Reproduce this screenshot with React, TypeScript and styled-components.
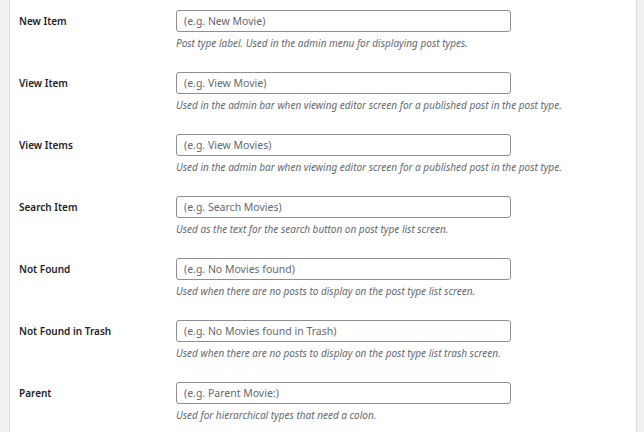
import React from "react";
import styled, { createGlobalStyle } from "styled-components";

const Global = createGlobalStyle`
  html, body { margin: 0; padding: 0; background: #f0f0f1; }
  body { font-family: "Noto Sans", "Open Sans", sans-serif; color: #1d2327; }
  * { box-sizing: border-box; }
`;

const Page = styled.div`
  padding-left: 9px;
  padding-right: 7px;
  height: 432px;
  overflow: hidden;
`;

const Panel = styled.div`
  background: #fff;
  border-left: 1px solid #dcdcde;
  border-right: 1px solid #dcdcde;
  height: 100%;
  padding: 10px 0 0 9px;
`;

const Row = styled.div`
  display: grid;
  grid-template-columns: 157px 335px;
  height: 62px;
`;

const Label = styled.label`
  font-size: 10px;
  font-weight: 600;
  line-height: 22px;
  color: #1d2327;
`;

const Field = styled.div`
  display: flex;
  flex-direction: column;
`;

const Input = styled.input`
  width: 335px;
  height: 22px;
  border: 1px solid #8c8f94;
  border-radius: 3px;
  padding: 0 7px;
  font-family: inherit;
  font-size: 10.5px;
  color: #2c3338;
  background: #fff;
  &::placeholder { color: #646970; opacity: 1; }
`;

const Desc = styled.p`
  margin: 4px 0 0;
  font-size: 10px;
  font-style: italic;
  color: #646970;
  white-space: nowrap;
  line-height: 14px;
`;

const rows = [
  ["New Item", "(e.g. New Movie)", "Post type label. Used in the admin menu for displaying post types."],
  ["View Item", "(e.g. View Movie)", "Used in the admin bar when viewing editor screen for a published post in the post type."],
  ["View Items", "(e.g. View Movies)", "Used in the admin bar when viewing editor screen for a published post in the post type."],
  ["Search Item", "(e.g. Search Movies)", "Used as the text for the search button on post type list screen."],
  ["Not Found", "(e.g. No Movies found)", "Used when there are no posts to display on the post type list screen."],
  ["Not Found in Trash", "(e.g. No Movies found in Trash)", "Used when there are no posts to display on the post type list trash screen."],
  ["Parent", "(e.g. Parent Movie:)", "Used for hierarchical types that need a colon."],
];

export default function App() {
  return (
    <>
      <Global />
      <Page>
        <Panel>
          {rows.map(([l, p, d]) => (
            <Row key={l}>
              <Label>{l}</Label>
              <Field>
                <Input placeholder={p} />
                <Desc>{d}</Desc>
              </Field>
            </Row>
          ))}
        </Panel>
      </Page>
    </>
  );
}
